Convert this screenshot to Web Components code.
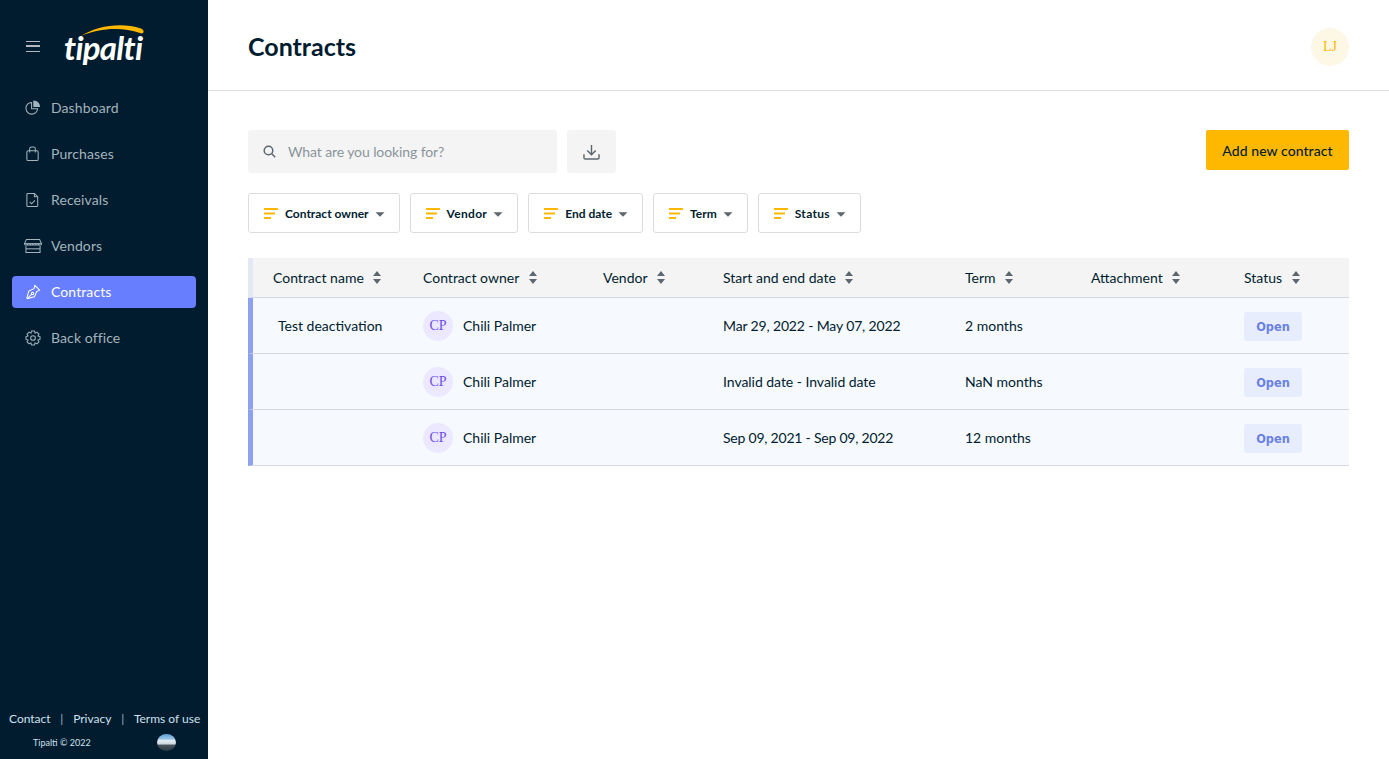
<!DOCTYPE html>
<html lang="en">
<head>
<meta charset="utf-8">
<title>Contracts</title>
<style>
  html, body { margin: 0; height: 100%; }
  body { font-family: Lato, "Liberation Sans", sans-serif; color: #001c2e; background: #fff; overflow: hidden; }
  #app { display: flex; height: 759px; }
</style>
</head>
<body>
<div id="app">
  <side-bar>
    <nav-item icon="dashboard" label="Dashboard"></nav-item>
    <nav-item icon="purchases" label="Purchases"></nav-item>
    <nav-item icon="receivals" label="Receivals"></nav-item>
    <nav-item icon="vendors" label="Vendors"></nav-item>
    <nav-item icon="contracts" label="Contracts" active></nav-item>
    <nav-item icon="office" label="Back office"></nav-item>
  </side-bar>
  <contracts-page>
    <filter-button label="Contract owner"></filter-button>
    <filter-button label="Vendor" style="--track:.3px"></filter-button>
    <filter-button label="End date"></filter-button>
    <filter-button label="Term"></filter-button>
    <filter-button label="Status" style="--track:.3px"></filter-button>
  </contracts-page>
</div>

<script>
// 8 tooth gear outline, centre 8.5
function gearPath() {
  const pts = [];
  for (let i = 0; i < 8; i++) {
    const t = i * Math.PI / 4;
    for (const [r, o] of [[5.6, -.39], [7.6, -.2], [7.6, .2], [5.6, .39]]) {
      pts.push((8.5 + r * Math.cos(t + o)).toFixed(2) + ' ' + (8.5 + r * Math.sin(t + o)).toFixed(2));
    }
  }
  return 'M' + pts.join('L') + 'z';
}

const ICONS = {
  dashboard: '<path d="M7 2.600a6.200 6.200 0 1 0 6.400 6.600H7z"/><path d="M9.400 1v6h6A6.200 6.200 0 0 0 9.400 1z" fill="currentColor"/>',
  purchases: '<rect x="2" y="5" width="12" height="10.500" rx="1.500"/><path d="M5 7V3a2 2 0 0 1 2-2h2a2 2 0 0 1 2 2v4"/>',
  receivals: '<path d="M3 1.500h7l3.500 3.500v9.500a1 1 0 0 1-1 1H3a1 1 0 0 1-1-1V2.500a1 1 0 0 1 1-1z"/><path d="M10 1.500V5h3.500"/><path d="M5 10.500l2 2 3.500-3.500"/>',
  vendors: '<path d="M1.500 1.500h14L17.500 6c0 2-3 2-3 0 0 2-3 2-3 0 0 2-3 2-3 0 0 2-3 2-3 0 0 2-3 2-3 0 0 2-3 2-3 0z"/><path d="M-.5 6h18"/><path d="M1 8.500v7h15v-7"/><path d="M1 11.500h15"/>',
  contracts: '<path d="M10.500 1.500l5 5-3 1.500-2.500 5.500-7.500 2-.5-.5 2-7.500 5.500-2.500z"/><path d="M2.500 15.500l4.500-4.500"/><circle cx="8" cy="10" r="1.200"/>',
  office: `<circle cx="8.500" cy="8.500" r="2.500"/><path d="${gearPath()}"/>`
};

class NavItem extends HTMLElement {
  constructor() {
    super();
    const shadow = this.attachShadow({ mode: 'open' });
    const icon = ICONS[this.getAttribute('icon')] || '';
    shadow.innerHTML = `
      <style>
        :host { display: flex; align-items: center; height: 32px; padding-left: 13px; gap: 10px; border-radius: 4px; font-size: 14px; letter-spacing: .1px; color: #a4b3bd; }
        :host([active]) { background: #667eff; color: #fff; }
        svg { width: 16px; height: 16px; fill: none; stroke: currentColor; stroke-width: 1.100; flex: none; overflow: visible; }
        span { padding-bottom: 2px; }
      </style>
      <svg viewBox="0 0 17 17">${icon}</svg>
      <span>${this.getAttribute('label')}</span>`;
  }
}
customElements.define('nav-item', NavItem);

class SideBar extends HTMLElement {
  constructor() {
    super();
    const shadow = this.attachShadow({ mode: 'open' });
    shadow.innerHTML = `
      <style>
        :host { display: flex; flex-direction: column; width: 208px; flex: none; background: #001c2e; box-sizing: border-box; }
        .top { display: flex; align-items: center; height: 92px; padding-left: 26px; gap: 25px; }
        .burger { width: 14px; height: 11px; border-top: 1.500px solid #aeb9c4; border-bottom: 1.500px solid #aeb9c4; position: relative; box-sizing: border-box; margin-top: 1px; }
        .burger::after { content: ""; position: absolute; left: 0; right: 0; top: 3.300px; height: 1.500px; background: #aeb9c4; }
        .logo { position: relative; width: 82px; height: 46px; }
        .logo span { position: absolute; left: -1px; top: 4px; font: italic 700 33px/40px Lato, "Liberation Sans", sans-serif; letter-spacing: -.7px; color: #fff; }
        .logo svg { position: absolute; left: 14px; top: 0; }
        nav { display: flex; flex-direction: column; gap: 14px; padding: 0 12px; }
        footer { margin-top: auto; padding: 0 0 8px 9px; color: #cfe0ee; }
        .links { display: flex; font-size: 12px; line-height: 16px; white-space: nowrap; }
        .sep { width: 22.500px; text-align: center; color: #9fb4c6; }
        .copy { display: flex; align-items: center; height: 18px; margin-top: 6px; padding-left: 24px; font-size: 9px; }
        .globe { width: 19px; height: 17px; border-radius: 50%; margin-left: 66px; background: linear-gradient(#5f9fd6 0, #9cc7e8 30%, #e3edf3 38%, #cfd8de 58%, #4a545c 66%, #2a3a46 100%); }
      </style>
      <div class="top">
        <div class="burger"></div>
        <div class="logo">
          <svg width="68" height="18" viewBox="0 0 68 18"><path d="M2 13C18 3 42 -1 62 5.500c2.500 1 2.800 2.500 2.500 3.500-.5 1.500-2 1.800-3.500 1C42 3.500 20 5.500 2 13z" fill="#ffb800"/></svg>
          <span>tipalti</span>
        </div>
      </div>
      <nav><slot></slot></nav>
      <footer>
        <div class="links"><span>Contact</span><span class="sep">|</span><span>Privacy</span><span class="sep">|</span><span>Terms of use</span></div>
        <div class="copy"><span>Tipalti © 2022</span><div class="globe"></div></div>
      </footer>`;
  }
}
customElements.define('side-bar', SideBar);

class FilterButton extends HTMLElement {
  constructor() {
    super();
    const shadow = this.attachShadow({ mode: 'open' });
    shadow.innerHTML = `
      <style>
        :host { display: inline-flex; align-items: center; box-sizing: border-box; height: 40px; padding: 0 14px 0 15px; border: 1px solid #dcdcdc; border-radius: 3px; font-size: 12px; font-weight: 700; letter-spacing: var(--track, 0); color: #001c2e; background: #fff; }
        svg { width: 14px; height: 11px; margin-right: 7px; flex: none; }
        span { white-space: nowrap; }
        i { width: 0; height: 0; margin: 2px 0 0 6px; border: 5px solid transparent; border-top: 5px solid #5c676f; border-bottom: 0; transform: scale(.9, .9); }
      </style>
      <svg viewBox="0 0 14 11"><path d="M0 0h14v2H0zM0 4.500h11v2H0zM0 9h7v2H0z" fill="#ffb800"/></svg>
      <span>${this.getAttribute('label')}</span>
      <i></i>`;
  }
}
customElements.define('filter-button', FilterButton);

class UserAvatar extends HTMLElement {
  constructor() {
    super();
    const shadow = this.attachShadow({ mode: 'open' });
    shadow.innerHTML = `
      <style>
        :host { display: flex; align-items: center; justify-content: center; flex: none; width: var(--size, 30px); height: var(--size, 30px); border-radius: 50%; background: var(--bg, #ece8ff); color: var(--fg, #6b4df0); font: 14px "Liberation Serif", serif; }
      </style>
      <slot></slot>`;
  }
}
customElements.define('user-avatar', UserAvatar);

class SortHeader extends HTMLElement {
  constructor() {
    super();
    const shadow = this.attachShadow({ mode: 'open' });
    shadow.innerHTML = `
      <style>
        :host { display: flex; align-items: center; gap: 9.500px; font-size: 14px; white-space: nowrap; }
        svg { width: 8px; height: 13px; flex: none; }
      </style>
      <slot></slot>
      <svg viewBox="0 0 8 13"><path d="M4 0l4 5H0zM0 8h8l-4 5z" fill="#5c676f"/></svg>`;
  }
}
customElements.define('sort-header', SortHeader);

class ContractRow extends HTMLElement {
  constructor() {
    super();
    const shadow = this.attachShadow({ mode: 'open' });
    const a = n => this.getAttribute(n) || '';
    shadow.innerHTML = `
      <style>
        :host { display: grid; grid-template-columns: 170px 180px 120px 242px 126px 153px 110px; height: 56px; box-sizing: border-box; align-items: center; background: #f6f9fe; border-left: 5px solid #8da2ef; border-bottom: 1px solid #d5d8e0; font-size: 14px; }
        .name { padding-left: 25px; }
        .owner { display: flex; align-items: center; gap: 10px; }
        .dates { letter-spacing: var(--date-track, 0); }
        .badge { justify-self: start; display: flex; align-items: center; justify-content: center; width: 58px; height: 29px; margin-top: 1px; padding-top: 1px; box-sizing: border-box; border-radius: 3px; background: #e8edfe; color: #6b82e0; font: 700 11.400px "DejaVu Sans", sans-serif; }
      </style>
      <div class="name">${a('name')}</div>
      <div class="owner"><user-avatar>CP</user-avatar><span>Chili Palmer</span></div>
      <div></div>
      <div class="dates">${a('dates')}</div>
      <div>${a('term')}</div>
      <div></div>
      <div class="badge">Open</div>`;
  }
}
customElements.define('contract-row', ContractRow);

class ContractsPage extends HTMLElement {
  constructor() {
    super();
    const shadow = this.attachShadow({ mode: 'open' });
    const cols = ['Contract name', 'Contract owner', 'Vendor', 'Start and end date', 'Term', 'Attachment', 'Status'];
    shadow.innerHTML = `
      <style>
        :host { display: flex; flex-direction: column; flex: 1; min-width: 0; }
        header { display: flex; align-items: center; justify-content: space-between; box-sizing: border-box; height: 91px; padding: 4px 40px 0; border-bottom: 1px solid #dcdcdc; }
        h1 { margin: 0 0 2px; font-size: 25px; font-weight: 700; color: #001c2e; }
        user-avatar { --size: 38px; --bg: #fdf7e6; --fg: #ffb800; }
        main { padding: 39px 40px 0; }
        .tools { display: flex; align-items: flex-start; gap: 10px; }
        .search { display: flex; align-items: center; gap: 12px; box-sizing: border-box; width: 309px; height: 43px; padding-left: 15px; background: #f4f4f4; border-radius: 3px; font-size: 14px; letter-spacing: -.1px; color: #8a949b; }
        .search svg { width: 13px; height: 13px; flex: none; }
        .download { display: flex; align-items: center; justify-content: center; width: 49px; height: 43px; background: #f4f4f4; border-radius: 3px; }
        .add { margin-left: auto; display: flex; align-items: center; justify-content: center; width: 143px; height: 40px; background: #ffb800; border-radius: 2px; font-size: 14px; font-weight: 500; letter-spacing: .07px; color: #001c2e; }
        .filters { display: flex; gap: 10px; margin-top: 20px; }
        .table { margin-top: 25px; }
        .head { display: grid; grid-template-columns: 170px 180px 120px 242px 126px 153px 110px; align-items: center; height: 40px; box-sizing: border-box; background: #f4f4f4; border-left: 5px solid #e3e8f5; border-bottom: 1px solid #d5d8e0; }
        .head sort-header:first-child { padding-left: 20px; }
      </style>
      <header>
        <h1>Contracts</h1>
        <user-avatar>LJ</user-avatar>
      </header>
      <main>
        <div class="tools">
          <div class="search">
            <svg viewBox="0 0 13 13" fill="none" stroke="#5c676f" stroke-width="1.500"><circle cx="5.500" cy="5.500" r="4.300"/><path d="M8.700 8.700l3.500 3.500"/></svg>
            <span>What are you looking for?</span>
          </div>
          <div class="download">
            <svg width="17" height="16" viewBox="0 0 18 17" fill="none" stroke="#5c676f" stroke-width="1.500"><path d="M9 1v10M4.500 7L9 11.500 13.500 7"/><path d="M1 11v3.500a1.500 1.500 0 0 0 1.500 1.500h13a1.500 1.500 0 0 0 1.500-1.500V11"/></svg>
          </div>
          <div class="add">Add new contract</div>
        </div>
        <div class="filters"><slot></slot></div>
        <div class="table">
          <div class="head">${cols.map(c => `<sort-header>${c}</sort-header>`).join('')}</div>
          <contract-row style="--date-track:-.15px" name="Test deactivation" dates="Mar 29, 2022 - May 07, 2022" term="2 months"></contract-row>
          <contract-row style="--date-track:-.04px" dates="Invalid date - Invalid date" term="NaN months"></contract-row>
          <contract-row style="--date-track:-.22px" dates="Sep 09, 2021 - Sep 09, 2022" term="12 months"></contract-row>
        </div>
      </main>`;
  }
}
customElements.define('contracts-page', ContractsPage);
</script>
</body>
</html>
